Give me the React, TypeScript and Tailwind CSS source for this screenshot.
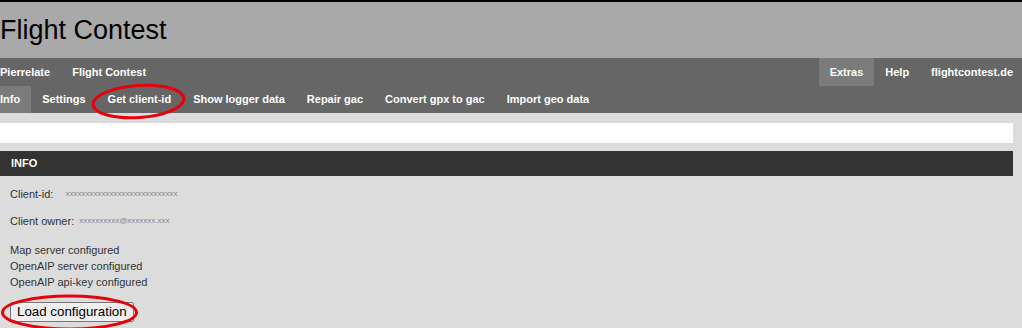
import React from 'react';

const leftTop = ['Pierrelate', 'Flight Contest'];
const subNav = ['Info', 'Settings', 'Get client-id', 'Show logger data', 'Repair gac', 'Convert gpx to gac', 'Import geo data'];

export default function App() {
  return (
    <div className="relative h-[328px] w-full overflow-hidden bg-[#dcdcdc] font-['Liberation_Sans',Arial,sans-serif]">
      <header className="flex h-[58px] items-center border-t-2 border-black bg-[#a9a9a9]">
        <h1 className="mt-[1px] text-[27px] leading-none text-black">Flight Contest</h1>
      </header>

      <nav className="flex h-[28px] justify-between bg-[#666666] text-[11px] font-bold text-white">
        <ul className="-ml-[11px] flex">
          {leftTop.map((item) => (
            <li key={item} className="flex items-center px-[11px]">
              {item}
            </li>
          ))}
        </ul>
        <ul className="flex">
          <li className="flex items-center bg-[#7b7b7b] px-[11px]">Extras</li>
          <li className="flex items-center px-[11px]">Help</li>
          <li className="flex items-center pl-[11px] pr-[9px]">flightcontest.de</li>
        </ul>
      </nav>

      <nav className="flex h-[27px] bg-[#666666] text-[11px] font-bold text-white">
        <ul className="-ml-[11px] flex">
          {subNav.map((item, i) => (
            <li key={item} className={`flex items-center px-[11px] ${i === 0 ? 'bg-[#7b7b7b]' : ''}`}>
              {item}
            </li>
          ))}
        </ul>
      </nav>

      <main className="pr-[9px] pt-[10px]">
        <div className="h-[20px] bg-white" />
        <div className="mt-[8px] flex h-[25px] items-center bg-[#333333] px-[11px] text-[11px] font-bold text-white">
          INFO
        </div>

        <div className="px-[10px] text-[11px] leading-[16px] text-[#333333]">
          <div className="mt-[10px] flex items-center">
            <span>Client-id:</span>
            <span className="ml-[12px] text-[8px] text-[#888888]">xxxxxxxxxxxxxxxxxxxxxxxxxxxx</span>
          </div>
          <div className="mt-[11px] flex items-center">
            <span>Client owner:</span>
            <span className="ml-[5px] text-[8px] text-[#888888]">xxxxxxxxxx@xxxxxxx.xxx</span>
          </div>
          <div className="mt-[13px]">Map server configured</div>
          <div>OpenAIP server configured</div>
          <div>OpenAIP api-key configured</div>
          <button className="mt-[12px] h-[20px] rounded-[2px] border border-[#767676] bg-[#efefef] px-[6px] text-[13.33px] leading-none text-black">
            Load configuration
          </button>
        </div>
      </main>

      <svg className="pointer-events-none absolute inset-0" width="1022" height="328" viewBox="0 0 1022 328">
        <ellipse cx="138.5" cy="101.5" rx="45.5" ry="16" fill="none" stroke="#e8000b" strokeWidth="3" transform="rotate(-4 138.5 101.5)" />
        <ellipse cx="69.5" cy="312.5" rx="67" ry="16.5" fill="none" stroke="#e8000b" strokeWidth="3" />
      </svg>
    </div>
  );
}
